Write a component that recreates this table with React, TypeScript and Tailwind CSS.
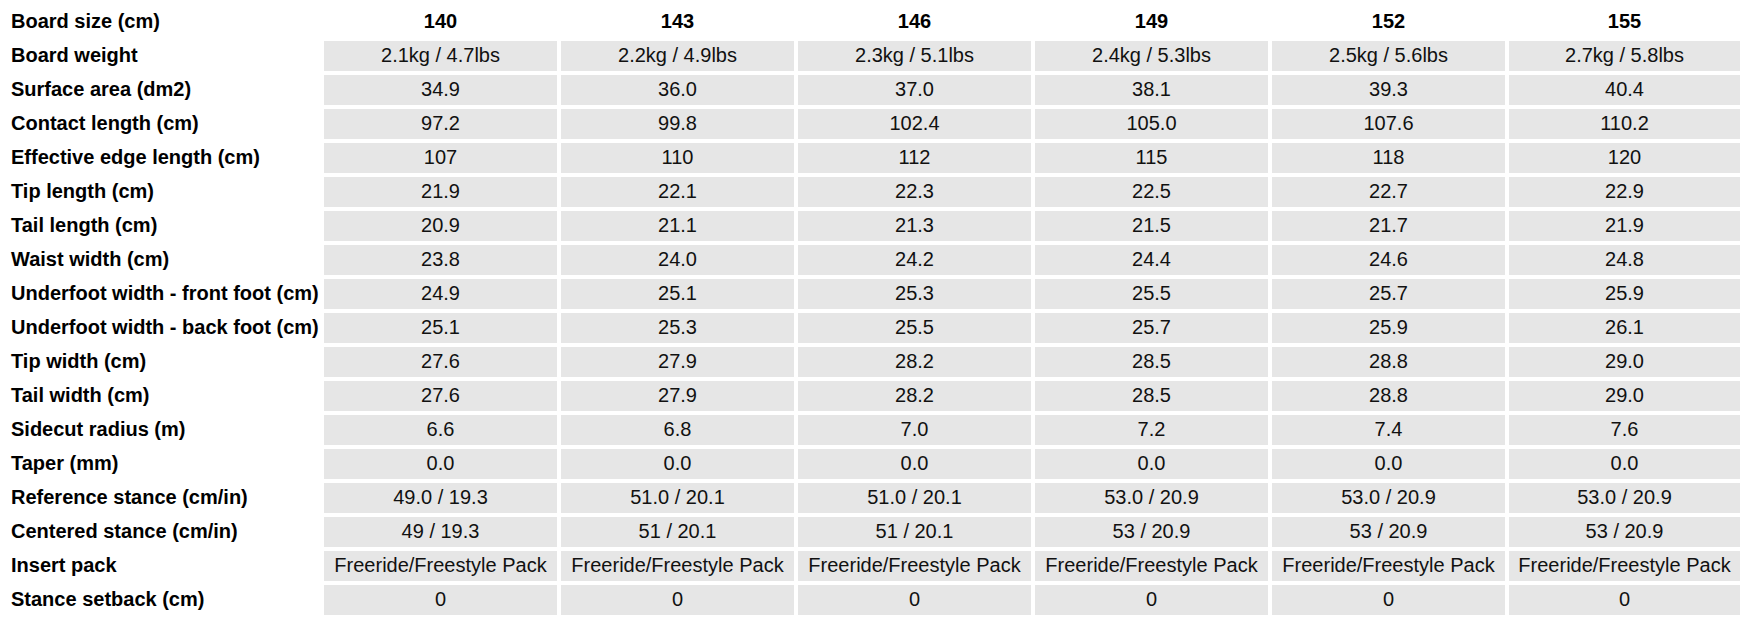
import React from 'react';

const sizes = ['140', '143', '146', '149', '152', '155'];

const rows: [string, string[]][] = [
  ['Board weight', ['2.1kg / 4.7lbs', '2.2kg / 4.9lbs', '2.3kg / 5.1lbs', '2.4kg / 5.3lbs', '2.5kg / 5.6lbs', '2.7kg / 5.8lbs']],
  ['Surface area (dm2)', ['34.9', '36.0', '37.0', '38.1', '39.3', '40.4']],
  ['Contact length (cm)', ['97.2', '99.8', '102.4', '105.0', '107.6', '110.2']],
  ['Effective edge length (cm)', ['107', '110', '112', '115', '118', '120']],
  ['Tip length (cm)', ['21.9', '22.1', '22.3', '22.5', '22.7', '22.9']],
  ['Tail length (cm)', ['20.9', '21.1', '21.3', '21.5', '21.7', '21.9']],
  ['Waist width (cm)', ['23.8', '24.0', '24.2', '24.4', '24.6', '24.8']],
  ['Underfoot width - front foot (cm)', ['24.9', '25.1', '25.3', '25.5', '25.7', '25.9']],
  ['Underfoot width - back foot (cm)', ['25.1', '25.3', '25.5', '25.7', '25.9', '26.1']],
  ['Tip width (cm)', ['27.6', '27.9', '28.2', '28.5', '28.8', '29.0']],
  ['Tail width (cm)', ['27.6', '27.9', '28.2', '28.5', '28.8', '29.0']],
  ['Sidecut radius (m)', ['6.6', '6.8', '7.0', '7.2', '7.4', '7.6']],
  ['Taper (mm)', ['0.0', '0.0', '0.0', '0.0', '0.0', '0.0']],
  ['Reference stance (cm/in)', ['49.0 / 19.3', '51.0 / 20.1', '51.0 / 20.1', '53.0 / 20.9', '53.0 / 20.9', '53.0 / 20.9']],
  ['Centered stance (cm/in)', ['49 / 19.3', '51 / 20.1', '51 / 20.1', '53 / 20.9', '53 / 20.9', '53 / 20.9']],
  ['Insert pack', Array(6).fill('Freeride/Freestyle Pack')],
  ['Stance setback (cm)', ['0', '0', '0', '0', '0', '0']],
];

const App: React.FC = () => {
  return (
    <div
      className="w-[1740px] h-[619px] overflow-hidden bg-white text-[20px] text-[#111] pt-[7px] pl-[4px]"
      style={{ fontFamily: '"Liberation Sans", Arial, sans-serif' }}
    >
      <div className="grid grid-cols-[316px_repeat(5,233px)_1fr] gap-[4px] auto-rows-[30px]">
        <div className="flex items-center pb-[2px] pl-[7px] font-bold text-black">Board size (cm)</div>
        {sizes.map(s => (
          <div key={s} className="flex items-center justify-center pb-[2px] font-bold text-black">{s}</div>
        ))}
        {rows.map(([label, vals]) => (
          <React.Fragment key={label}>
            <div className="flex items-center pb-[2px] pl-[7px] font-bold text-black whitespace-nowrap">{label}</div>
            {vals.map((v, i) => (
              <div key={i} className="flex items-center justify-center pb-[2px] bg-[#e6e6e6] whitespace-nowrap">{v}</div>
            ))}
          </React.Fragment>
        ))}
      </div>
    </div>
  );
};

export default App;
